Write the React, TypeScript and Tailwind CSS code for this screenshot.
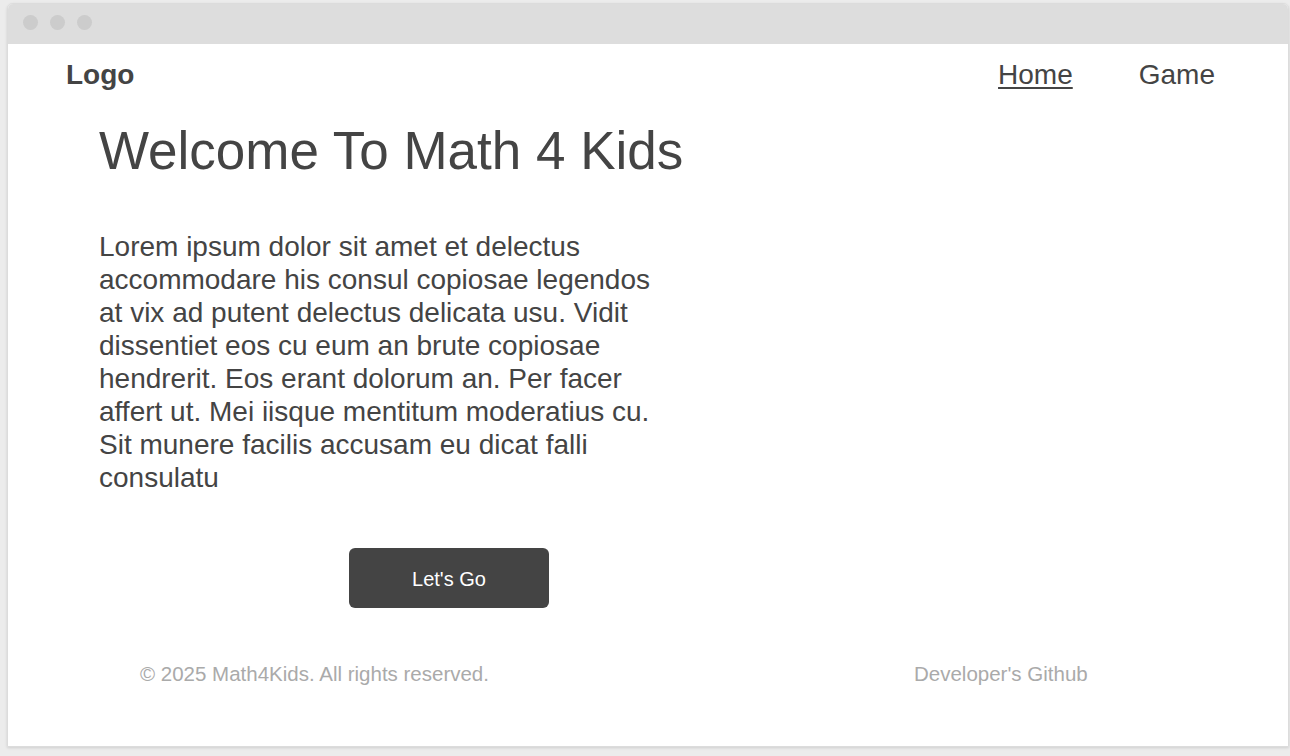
export default function App() {
  const navLinks = [
    { label: "Home", active: true },
    { label: "Game", active: false },
  ]

  return (
    <div className="h-[756px] w-[1290px] overflow-hidden bg-[#ececec] pt-[3px] pl-[7px] font-['Liberation_Sans',Arial,sans-serif] text-[#444444]">
      <div className="flex h-[744px] w-[1282px] flex-col overflow-hidden rounded-t-[6px] border border-[#dcdcdc] bg-white shadow-[0_1px_3px_rgba(0,0,0,0.12)]">
        {/* browser chrome */}
        <div className="flex h-[40px] shrink-0 items-start gap-[12px] bg-[#dddddd] pt-[11px] pl-[15px]">
          <span className="h-[15px] w-[15px] rounded-full bg-[#cccccc]" />
          <span className="h-[15px] w-[15px] rounded-full bg-[#cccccc]" />
          <span className="h-[15px] w-[15px] rounded-full bg-[#cccccc]" />
        </div>

        <header className="flex items-center justify-between py-[15px] pl-[58px] pr-[73px]">
          <a className="text-[28px] leading-[32px] font-bold">Logo</a>
          <nav className="flex gap-[66px]">
            {navLinks.map((link) => (
              <a
                key={link.label}
                className={`text-[28px] leading-[32px] ${link.active ? "underline underline-offset-[3px] decoration-[2px]" : ""}`}
              >
                {link.label}
              </a>
            ))}
          </nav>
        </header>

        <main className="ml-[91px] w-[700px]">
          <h1 className="mt-[15px] text-[53px] leading-[60px] font-normal">
            Welcome To Math 4 Kids
          </h1>
          <p className="mt-[49px] w-[560px] text-[28px] leading-[33px]">
            Lorem ipsum dolor sit amet et delectus accommodare his consul copiosae legendos at vix ad putent
            delectus delicata usu. Vidit dissentiet eos cu eum an brute copiosae hendrerit. Eos erant dolorum
            an. Per facer affert ut. Mei iisque mentitum moderatius cu. Sit munere facilis accusam eu dicat
            falli consulatu
          </p>
          <div className="mt-[54px] flex justify-center">
            <button className="h-[60px] w-[200px] rounded-[6px] bg-[#444444] pt-[2px] text-[20px] text-white">
              Let's Go
            </button>
          </div>
        </main>

        <footer className="mt-[54px] flex text-[20.5px] leading-[24px] text-[#aaaaaa]">
          <span className="ml-[132px]">© 2025 Math4Kids. All rights reserved.</span>
          <a className="ml-[425px]">Developer's Github</a>
        </footer>
      </div>
    </div>
  )
}
